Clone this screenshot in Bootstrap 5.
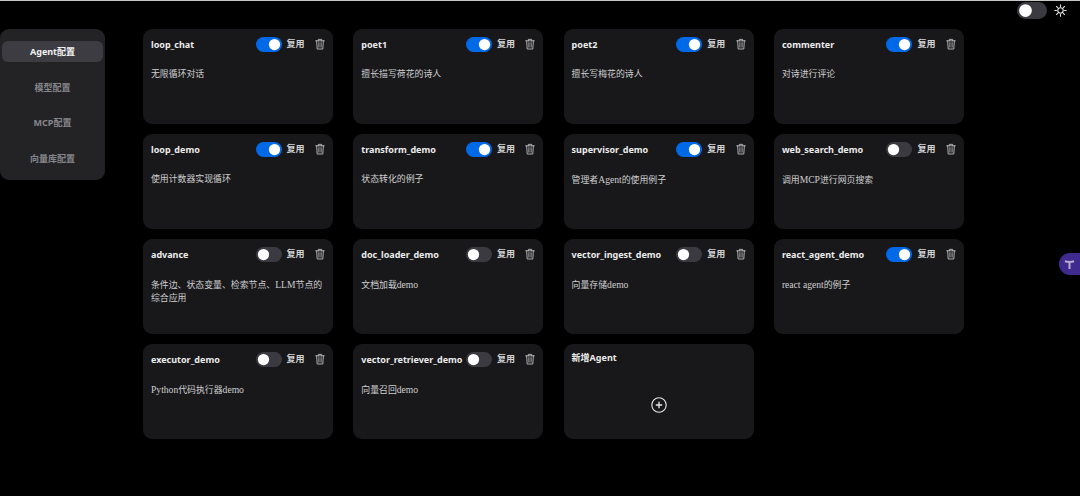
<!DOCTYPE html>
<html lang="zh">
<head>
<meta charset="utf-8">
<title>Agent配置</title>
<link href="https://cdn.jsdelivr.net/npm/bootstrap@5.3.0/dist/css/bootstrap.min.css" rel="stylesheet">
<style>
html,body{height:496px;overflow:hidden}
body{background:#000;color:#e6e6e6;font-family:"Noto Sans","Noto Sans CJK SC",sans-serif;border-top:1px solid #c8c8c8}
.topbar{height:18px;padding-right:13px;gap:7px}
.swi.form-check-input{width:26px;height:15px;margin:0;border:0;background-color:#3a3a40;box-shadow:none;
 background-image:url("data:image/svg+xml,%3csvg xmlns='http://www.w3.org/2000/svg' viewBox='-4 -4 8 8'%3e%3ccircle r='3' fill='%23fff'/%3e%3c/svg%3e");cursor:pointer}
.swi.form-check-input:checked{background-color:#0069e8}
.swi-lg.form-check-input{width:30px;height:17px;background-color:#3a3a40}
.form-switch.swi-wrap{padding:0;min-height:0;margin:0;display:flex}
.shell{padding-top:10px;gap:38px}
.side{width:105px;height:151px;background:#232326;border-radius:9px;padding:12px 2px 0 2px;flex:none}
.side-item{height:21px;line-height:21px;margin-bottom:14.5px;font-size:9px;font-weight:700;color:#86868b;text-align:center;border-radius:6px}
.side-item.on{background:#3c3c42;color:#f2f2f2}
.agents{display:grid;grid-template-columns:repeat(4,190px);grid-auto-rows:95px;column-gap:20.3px;row-gap:10px}
.agent{background:#18181b;border-radius:9px;padding:0 8px;position:relative}
.agent-h{height:30px}
.agent-n{font-size:9px;font-weight:700;color:#ececec;white-space:nowrap;margin-bottom:2px}
.agent-n.sunk{margin-bottom:0;padding-top:1px}
.reuse{font-size:9px;font-weight:600;color:#d4d4d4;margin-left:5px;margin-right:10.4px;white-space:nowrap}
.desc{font-family:"Liberation Serif","Noto Sans CJK SC",serif;font-size:8.9px;line-height:13px;color:#cfcfcf;margin:9px 0 0}
.latin{font-size:9.6px}
.plus{margin-top:23px}
.fab{position:fixed;right:0;top:253px;width:21px;height:22px;border-radius:11px 0 0 11px;background:#3f2b8f}
</style>
</head>
<body>
<div class="topbar d-flex justify-content-end align-items-center">
  <div class="form-check form-switch swi-wrap"><input class="form-check-input swi swi-lg" type="checkbox" role="switch" aria-label="主题"></div>
  <svg width="13" height="13" viewBox="0 0 24 24" fill="none" stroke="#e8e8e8" stroke-width="2" stroke-linecap="round"><circle cx="12" cy="12" r="5"/><path d="M12 1.5v3M12 19.5v3M1.5 12h3M19.5 12h3M4.6 4.6l2.1 2.1M17.3 17.3l2.1 2.1M4.6 19.4l2.1-2.1M17.3 6.7l2.1-2.1"/></svg>
</div>
<div class="shell d-flex">
  <nav class="side">
    <div class="side-item on">Agent配置</div>
    <div class="side-item">模型配置</div>
    <div class="side-item">MCP配置</div>
    <div class="side-item">向量库配置</div>
  </nav>
  <main class="agents" id="g"></main>
</div>
<div class="fab d-flex align-items-center justify-content-center">
  <svg width="11" height="11" viewBox="0 0 12 12" fill="none" stroke="#b4aed0" stroke-width="2.2"><path d="M1 2.5c3 1 7 1 10 0M6 3v8"/></svg>
</div>
<script>
const trash='<svg width="10" height="12" viewBox="0 0 11 13" fill="none" stroke="#bdbdbd" stroke-width="1" stroke-linecap="round"><path d="M.8 3h9.4M3.7 3V1.4h3.6V3M1.8 3l.6 9h6.2l.6-9M4.3 5v5M6.7 5v5"/></svg>';
const data=[["loop_chat",1,"无限循环对话"],["poet1",1,"擅长描写荷花的诗人"],["poet2",1,"擅长写梅花的诗人"],["commenter",1,"对诗进行评论"],
["loop_demo",1,"使用计数器实现循环"],["transform_demo",1,"状态转化的例子"],["supervisor_demo",1,"管理者Agent的使用例子"],["web_search_demo",0,"调用MCP进行网页搜索"],
["advance",0,"条件边、状态变量、检索节点、LLM节点的<br>综合应用"],["doc_loader_demo",0,"文档加载demo"],["vector_ingest_demo",0,"向量存储demo"],["react_agent_demo",1,"react agent的例子"],
["executor_demo",0,"Python代码执行器demo"],["vector_retriever_demo",0,"向量召回demo"]];
let h='';
for(const [n,on,d] of data){
 const dd=d.replace(/[A-Z a-z]+(?![^<]*>)/g,'<span class="latin">$&</span>');
 h+=`<section class="agent"><div class="agent-h d-flex align-items-center"><span class="agent-n sunk flex-grow-1">${n}</span><div class="form-check form-switch swi-wrap"><input class="form-check-input swi" type="checkbox" role="switch" aria-label="${n}" ${on?'checked':''}></div><span class="reuse">复用</span>${trash}</div><p class="desc">${dd}</p></section>`;
}
h+=`<section class="agent"><div class="agent-h d-flex align-items-center"><span class="agent-n">新增Agent</span></div><div class="plus d-flex justify-content-center"><svg width="16" height="16" viewBox="0 0 16 16" fill="none" stroke="#e8e8e8"><circle cx="8" cy="8" r="7.2" stroke-width="1.1"/><path d="M4.8 8h6.4M8 4.8v6.4" stroke-width="1.3"/></svg></div></section>`;
document.getElementById('g').innerHTML=h;
</script>
<script src="https://cdn.jsdelivr.net/npm/bootstrap@5.3.0/dist/js/bootstrap.bundle.min.js"></script>
</body>
</html>
